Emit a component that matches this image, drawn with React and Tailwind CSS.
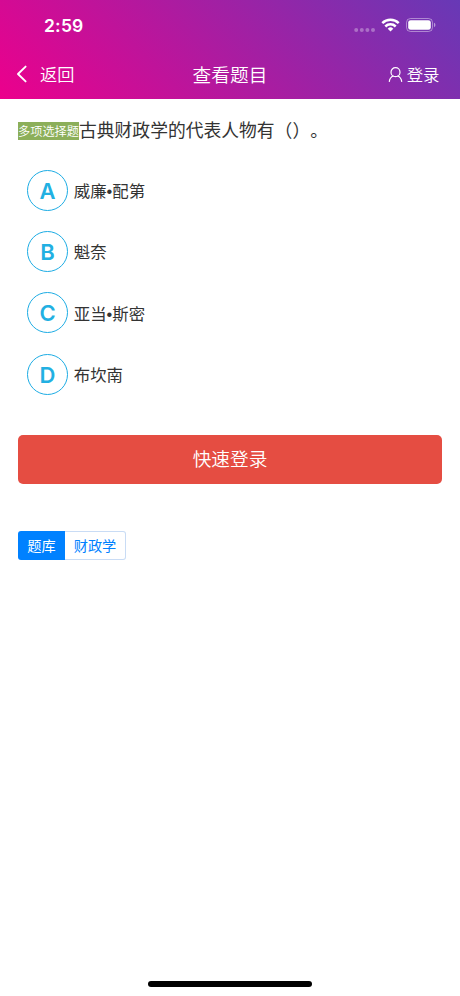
import React from 'react';

const options = [
  { key: 'A', text: '威廉•配第' },
  { key: 'B', text: '魁奈' },
  { key: 'C', text: '亚当•斯密' },
  { key: 'D', text: '布坎南' },
];

const StatusBar = () => (
  <div className="h-[50px] pl-[44px] pr-[24px] flex items-center justify-between">
    <span className="pt-[2px] font-['Inter',sans-serif] font-semibold text-[17.5px] leading-none tracking-[0.2px]">2:59</span>
    <div className="flex items-center">
      <svg className="mr-[6px] mt-[9px]" width="22" height="4" viewBox="0 0 22 4" fill="#fff" fillOpacity="0.32">
        <circle cx="3.2" cy="2" r="2" />
        <circle cx="8.8" cy="2" r="2" />
        <circle cx="14.4" cy="2" r="2" />
        <circle cx="20" cy="2" r="2" />
      </svg>
      <svg className="mr-[6px]" width="19" height="14" viewBox="0 0 19 14" fill="none" stroke="#fff" strokeWidth="2.5">
        <path d="M1.3 5.1a11.7 11.7 0 0 1 16.4 0" />
        <path d="M4.3 8.5a7.4 7.4 0 0 1 10.4 0" />
        <path d="M9.5 13.6 6.7 10.7a4 4 0 0 1 5.6 0Z" fill="#fff" stroke="none" />
      </svg>
      <svg width="30" height="14" viewBox="0 0 30 14">
        <rect x="0.5" y="0.5" width="26" height="13" rx="4" fill="none" stroke="#fff" strokeOpacity="0.42" />
        <rect x="2.2" y="2.2" width="22.6" height="9.6" rx="2.4" fill="#fff" />
        <path d="M28 4.8v4.4a2.4 2.4 0 0 0 0-4.4Z" fill="#fff" fillOpacity="0.5" />
      </svg>
    </div>
  </div>
);

const NavBar = () => (
  <div className="h-[49px] pl-[16px] pr-[20.5px] grid grid-cols-3 items-center font-[350]">
    <button className="flex items-center text-[17.2px] leading-none">
      <svg className="mr-[12px]" width="12" height="18" viewBox="0 0 12 18" fill="none" stroke="#fff" strokeWidth="1.9" strokeLinecap="round" strokeLinejoin="round">
        <path d="M9.6 1.6 2 9l7.6 7.4" />
      </svg>
      <span className="pt-[2px]">返回</span>
    </button>
    <h1 className="pl-[4.5px] pt-[3px] text-center text-[18.7px] leading-none whitespace-nowrap">查看题目</h1>
    <button className="flex items-center justify-end text-[16.4px] leading-none">
      <svg className="mr-[4px]" width="15" height="16" viewBox="0 0 15 16" fill="none" stroke="#fff" strokeWidth="1.2" strokeLinecap="round">
        <circle cx="7.5" cy="5.2" r="4.5" />
        <path d="M1.3 14.4c.4-2.7 1.8-4.6 4-5.4M13.7 14.4c-.4-2.7-1.8-4.6-4-5.4" />
      </svg>
      <span className="pt-[1px]">登录</span>
    </button>
  </div>
);

const App = () => {
  return (
    <div className="h-[996px] bg-white text-[#333] flex flex-col font-['Liberation_Sans','Noto_Sans_CJK_SC',sans-serif]">
      <header className="h-[99px] shrink-0 text-white bg-[linear-gradient(45deg,#ec008c,#6739b6)]">
        <StatusBar />
        <NavBar />
      </header>

      <main className="flex-1 px-[18px]">
        <div className="h-[61px] pt-[17px] flex items-start">
          <span className="mt-[6px] pt-[2px] w-[61px] h-[18px] shrink-0 flex items-center justify-center bg-[#8caf5a] text-white font-[350] text-[12.2px] leading-none whitespace-nowrap">多项选择题</span>
          <p className="text-[17.8px] leading-[30px] whitespace-nowrap [text-spacing-trim:space-all]">古典财政学的代表人物有（）。</p>
        </div>

        <ul>
          {options.map((o) => (
            <li key={o.key} className="h-[61.2px] pl-[9px] flex items-center">
              <span className="w-[41px] h-[41px] rounded-full border border-[#1cace4] flex items-center justify-center pt-[1px] text-[#22b0e2] font-['Inter',sans-serif] font-semibold text-[22px] leading-none">
                {o.key}
              </span>
              <span className="ml-[5.8px] pt-[1.5px] text-[16.4px] leading-none">{o.text}</span>
            </li>
          ))}
        </ul>

        <button className="mt-[30px] pt-[3px] w-full h-[49px] rounded-[5px] bg-[#e54d42] text-white font-[350] text-[18.7px] leading-none flex items-center justify-center">
          快速登录
        </button>

        <div className="mt-[47.5px] inline-flex h-[29px] text-[14.2px] leading-none">
          <span className="w-[47px] rounded-l-[3px] bg-[#0081ff] text-white flex items-center justify-center">题库</span>
          <span className="w-[61px] rounded-r-[3px] border border-l-0 border-[#c9dcf5] text-[#0081ff] flex items-center justify-center">财政学</span>
        </div>
      </main>

      <div className="mb-[9px] mx-auto w-[164px] h-[6px] shrink-0 rounded-full bg-black" />
    </div>
  );
};

export default App;
